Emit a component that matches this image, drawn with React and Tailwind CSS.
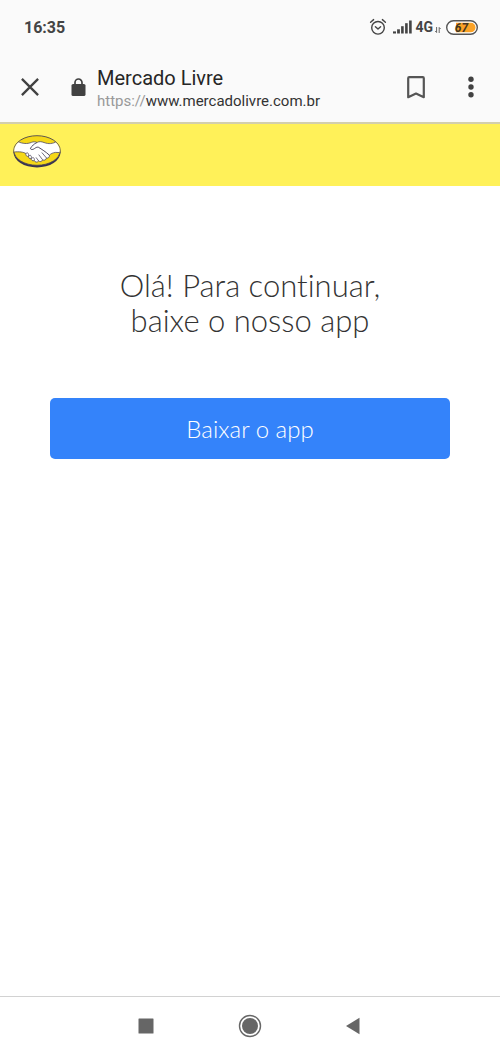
function StatusBar() {
  return (
    <div className="flex h-[54px] items-center justify-between pl-6 pr-[22px] text-[#444]">
      <span className="pt-px text-base font-bold">16:35</span>
      <div className="flex items-center">
        <svg className="mr-[6px] h-[18px] w-[18px]" viewBox="0 0 18 18" fill="none" stroke="#444" strokeWidth="1.4" strokeLinecap="round" strokeLinejoin="round" aria-hidden="true">
          <circle cx="9" cy="9.8" r="6.3" />
          <path d="M1.6 4.2 4.6 1.6M16.4 4.2 13.4 1.6M6.4 8.7 9 11 11.6 8.7" />
        </svg>
        <svg className="mr-[3px] h-[14px] w-[19px]" viewBox="0 0 19 14" fill="#444" aria-hidden="true">
          <rect x="0" y="11.4" width="3" height="2.1" />
          <rect x="4.1" y="9.3" width="2.8" height="4.2" />
          <rect x="8.1" y="6.2" width="2.6" height="7.3" />
          <rect x="12.1" y="3.2" width="2.6" height="10.3" />
          <rect x="16.1" y="0.5" width="2.6" height="13" />
        </svg>
        <span className="text-sm font-bold">4G</span>
        <svg className="ml-[2px] mr-[5px] mt-[6px] h-[6px] w-[6px]" viewBox="0 0 6 6" fill="none" stroke="#555" strokeWidth="0.9" aria-hidden="true">
          <path d="M1.6 0v5.5L0.2 4M4.2 6V0.5L5.6 2" />
        </svg>
        <svg className="h-[15px] w-8" viewBox="0 0 32 15" role="img" aria-label="Bateria 67%">
          <defs>
            <clipPath id="charge">
              <rect x="2.5" y="2.5" width="27" height="10" rx="5" />
            </clipPath>
          </defs>
          <rect x="0.7" y="0.7" width="30.6" height="13.6" rx="6.8" fill="#fff" stroke="#555" strokeWidth="1.4" />
          <rect x="10" y="2.5" width="20" height="10" fill="#fba226" clipPath="url(#charge)" />
          <text x="15.5" y="11.8" textAnchor="middle" fill="#443522" className="text-xs font-bold italic">67</text>
        </svg>
      </div>
    </div>
  );
}

function BrowserBar() {
  return (
    <div className="flex h-[68px] items-center pb-[2px] pl-[21px] pr-[26px]">
      <button type="button" aria-label="Fechar" className="mr-8">
        <svg className="h-[18px] w-[18px]" viewBox="0 0 18 18" stroke="#414141" strokeWidth="2.3" aria-hidden="true">
          <path d="M0.9 0.9 17.1 17.1M17.1 0.9 0.9 17.1" />
        </svg>
      </button>
      <svg className="mr-[11px] h-[18px] w-[15px]" viewBox="0 0 15 18" aria-hidden="true">
        <path d="M4 8V4.5a3.5 3.5 0 0 1 7 0V8" fill="none" stroke="#414141" strokeWidth="1.7" />
        <rect x="0.5" y="6" width="14" height="12" rx="1.6" fill="#414141" />
      </svg>
      <div className="min-w-0 flex-1 pt-1">
        <div className="truncate text-xl leading-6 text-[#262626]">Mercado Livre</div>
        <div className="truncate text-[15px] leading-[22px] text-[#333]">
          <span className="text-[#999]">https://</span>www.mercadolivre.com.br
        </div>
      </div>
      <button type="button" aria-label="Adicionar aos favoritos" className="mr-[43px]">
        <svg className="h-[23px] w-[18px]" viewBox="0 0 18 23" fill="none" stroke="#555" strokeWidth="2.2" strokeLinejoin="round" aria-hidden="true">
          <path d="M1.2 2.2Q1.2 1.2 2.2 1.2H15.8Q16.8 1.2 16.8 2.2V21.2L9 17.6 1.2 21.2Z" />
        </svg>
      </button>
      <button type="button" aria-label="Mais opções">
        <svg className="h-[22px] w-[6px]" viewBox="0 0 6 22" fill="#414141" aria-hidden="true">
          <circle cx="3" cy="3.3" r="2.7" />
          <circle cx="3" cy="11" r="2.7" />
          <circle cx="3" cy="18.7" r="2.7" />
        </svg>
      </button>
    </div>
  );
}

function Logo() {
  return (
    <svg className="h-[34px] w-12" viewBox="0 0 48 34" aria-hidden="true">
      <defs>
        <clipPath id="oval">
          <ellipse cx="24" cy="15.5" rx="22.7" ry="14.2" />
        </clipPath>
      </defs>
      <ellipse cx="24" cy="17.2" rx="23.5" ry="15.2" fill="#393351" />
      <ellipse cx="24" cy="15.5" rx="23.2" ry="14.8" fill="#f5d817" stroke="#4c4653" strokeWidth="0.9" />
      <g clipPath="url(#oval)">
        <path d="M0 7.2 4.5 6.6C10 8.7 14 9.3 18.6 7.3 20.3 6.7 22 6.5 24 7.5 26.2 6.2 28.5 6.6 31 7.5 36 9.4 39.5 8.7 43.8 6.6L49 8V17.6L42.5 17.4C39.7 17.8 37.9 18.7 36.4 20.2 36.7 22.2 35.2 23.4 33.5 23 33 25 31.2 25.7 29.7 24.9 28.8 26.7 27 27 25.7 26 24.3 27.7 21.9 27.3 21.3 25.6 19.6 26.3 18.1 25.2 18.2 23.7 16.4 24 15.3 22.7 15.6 21.4 13.7 21.7 12.3 20.2 13 18.6 10.2 17 7.4 16.5 0 17Z" fill="#fff" stroke="#514b60" strokeWidth="0.8" />
        <path d="M24 7.5C20.8 8.9 19.2 10.8 17.5 13.2 17.2 14.7 19.5 15 21.3 13.7 22.6 12.8 23.6 11.9 25.3 12.2 28.8 14.3 33 17 36.4 20.2" fill="#fff" stroke="#514b60" strokeWidth="1" />
        <path d="M13 18.6C14.2 17.1 16.1 17.8 15.6 21.4 17 19.3 19.1 20.4 18.2 23.7 19.8 21.7 22 22.8 21.3 25.6M28.8 17.5 33.5 23M25.7 19.6 29.7 24.9M23 22.4 25.7 26" fill="none" stroke="#514b60" strokeWidth="0.8" />
      </g>
    </svg>
  );
}

function NavigationBar() {
  return (
    <nav className="flex h-[60px] items-center justify-center gap-[84px] border-t border-[#d2d2d2] bg-white pb-px text-[#666]">
      <button type="button" aria-label="Recentes">
        <svg className="h-[16px] w-[16px]" viewBox="0 0 16 16" fill="currentColor" aria-hidden="true">
          <rect x="0.5" y="0.5" width="15" height="15" rx="0.5" />
        </svg>
      </button>
      <button type="button" aria-label="Início">
        <svg className="h-6 w-6" viewBox="0 0 24 24" fill="currentColor" aria-hidden="true">
          <circle cx="12" cy="12" r="10.5" fill="none" stroke="currentColor" strokeWidth="1.4" />
          <circle cx="12" cy="12" r="8" />
        </svg>
      </button>
      <button type="button" aria-label="Voltar">
        <svg className="h-[18px] w-[16px]" viewBox="0 0 16 18" fill="currentColor" aria-hidden="true">
          <path d="M0 9 13.5 0.8V17.2Z" />
        </svg>
      </button>
    </nav>
  );
}

export default function App() {
  return (
    <div className="flex min-h-screen flex-col bg-white font-['Roboto',sans-serif]">
      <header className="border-b-2 border-[#d3cfad] bg-[#fafafa]">
        <StatusBar />
        <BrowserBar />
      </header>
      <div className="flex h-[62px] items-center bg-[#fff159] pb-[6px] pl-[13px]">
        <a href="#inicio" aria-label="Mercado Livre">
          <Logo />
        </a>
      </div>
      <main className="flex flex-1 flex-col px-[50px] pt-[82px] font-['Lato',sans-serif] [font-variant-ligatures:none]">
        <h1 className="text-center text-[31px] font-light leading-[35px] text-[#333]">
          Olá! Para continuar,
          <br />
          baixe o nosso app
        </h1>
        <button type="button" className="mt-[60px] h-[61px] w-full rounded-[5px] bg-[#3483fa] text-2xl font-light text-white">
          Baixar o app
        </button>
      </main>
      <NavigationBar />
    </div>
  );
}
